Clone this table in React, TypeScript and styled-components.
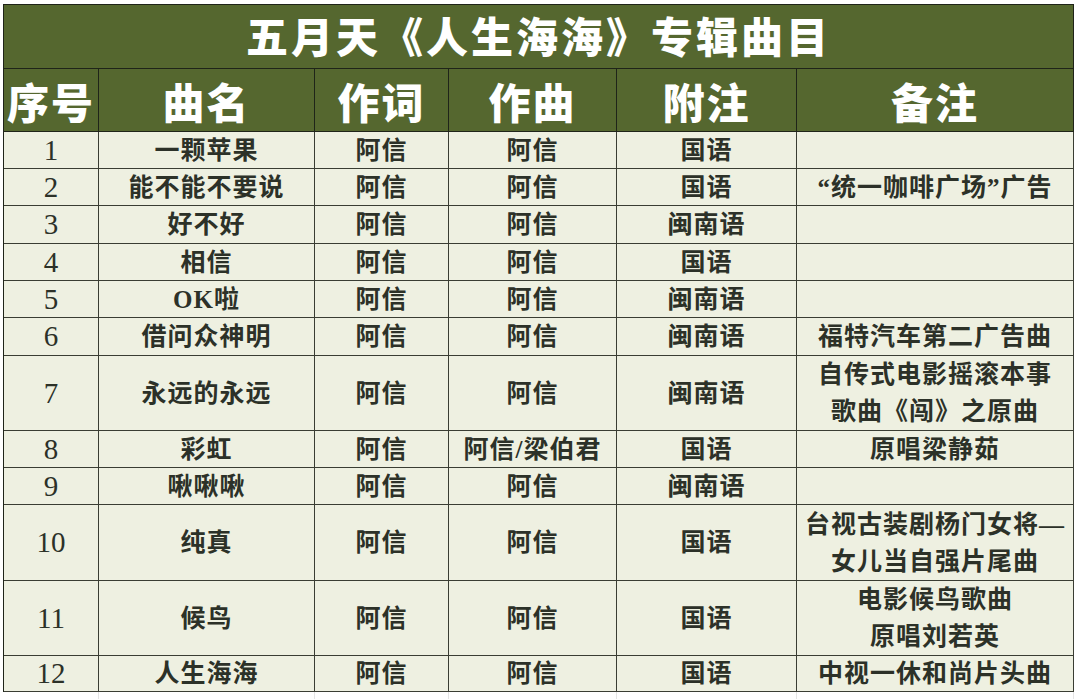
import styled, { createGlobalStyle } from 'styled-components'

const GlobalStyle = createGlobalStyle`
  html, body {
    margin: 0;
    padding: 0;
    background: #ffffff;
  }
  body {
    font-family: 'Liberation Serif', 'Noto Sans CJK SC', serif;
  }
`

const Page = styled.div`
  width: 1080px;
  height: 699px;
  padding: 4px 0 0 3px;
  box-sizing: border-box;
  overflow: hidden;
`

const columns = '95px 216px 134px 168px 180px 277px'

const Sheet = styled.div`
  display: grid;
  width: 1071px;
  grid-template-columns: ${columns};
  grid-template-rows: 64px 63px 37px 37px 38px 37px 37px 38px 75px 37px 37px 76px 75px 36px;
  border-top: 1px solid #1f2419;
  border-left: 1px solid #1f2419;
  box-sizing: border-box;
`

// faint spreadsheet gridlines continuing under the table
const Spill = styled.div`
  display: grid;
  width: 1071px;
  height: 12px;
  padding-left: 1px;
  box-sizing: border-box;
  grid-template-columns: ${columns};
`

const SpillCol = styled.div`
  border-right: 1px solid #e4e4e4;
`

const Title = styled.div`
  grid-column: 1 / -1;
  display: flex;
  align-items: center;
  justify-content: center;
  background: #55672f;
  color: #ffffff;
  font-family: 'Noto Sans CJK SC', sans-serif;
  font-weight: 900;
  font-size: 42px;
  letter-spacing: 3px;
  border-right: 1px solid #1f2419;
  border-bottom: 1px solid #1f2419;
  padding-bottom: 4px;
`

const Head = styled.div`
  display: flex;
  align-items: center;
  justify-content: center;
  background: #55672f;
  color: #ffffff;
  font-family: 'Noto Sans CJK SC', sans-serif;
  font-weight: 900;
  font-size: 42px;
  letter-spacing: 2px;
  border-right: 1px solid #1f2419;
  border-bottom: 1px solid #1f2419;
`

const Cell = styled.div<{ $num?: boolean }>`
  display: flex;
  flex-direction: column;
  align-items: center;
  justify-content: center;
  background: #eef0e1;
  color: #2c3128;
  font-family: ${(p) =>
    p.$num
      ? "'Liberation Serif', serif"
      : "'Liberation Serif', 'Noto Sans CJK SC', serif"};
  font-weight: ${(p) => (p.$num ? 400 : 700)};
  font-size: ${(p) => (p.$num ? '29px' : '25px')};
  letter-spacing: ${(p) => (p.$num ? '0' : '1px')};
  line-height: 37px;
  white-space: nowrap;
  border-right: 1px solid #3a3d33;
  border-bottom: 1px solid #3a3d33;
`

type Song = {
  no: number
  name: string
  lyric: string
  music: string
  lang: string
  note: string[]
}

const songs: Song[] = [
  { no: 1, name: '一颗苹果', lyric: '阿信', music: '阿信', lang: '国语', note: [] },
  { no: 2, name: '能不能不要说', lyric: '阿信', music: '阿信', lang: '国语', note: ['“统一咖啡广场”广告'] },
  { no: 3, name: '好不好', lyric: '阿信', music: '阿信', lang: '闽南语', note: [] },
  { no: 4, name: '相信', lyric: '阿信', music: '阿信', lang: '国语', note: [] },
  { no: 5, name: 'OK啦', lyric: '阿信', music: '阿信', lang: '闽南语', note: [] },
  { no: 6, name: '借问众神明', lyric: '阿信', music: '阿信', lang: '闽南语', note: ['福特汽车第二广告曲'] },
  { no: 7, name: '永远的永远', lyric: '阿信', music: '阿信', lang: '闽南语', note: ['自传式电影摇滚本事', '歌曲《闯》之原曲'] },
  { no: 8, name: '彩虹', lyric: '阿信', music: '阿信/梁伯君', lang: '国语', note: ['原唱梁静茹'] },
  { no: 9, name: '啾啾啾', lyric: '阿信', music: '阿信', lang: '闽南语', note: [] },
  { no: 10, name: '纯真', lyric: '阿信', music: '阿信', lang: '国语', note: ['台视古装剧杨门女将—', '女儿当自强片尾曲'] },
  { no: 11, name: '候鸟', lyric: '阿信', music: '阿信', lang: '国语', note: ['电影候鸟歌曲', '原唱刘若英'] },
  { no: 12, name: '人生海海', lyric: '阿信', music: '阿信', lang: '国语', note: ['中视一休和尚片头曲'] },
]

const headers = ['序号', '曲名', '作词', '作曲', '附注', '备注']

const App = () => {
  return (
    <>
      <GlobalStyle />
      <Page>
        <Sheet>
          <Title>五月天《人生海海》专辑曲目</Title>
          {headers.map((h) => (
            <Head key={h}>{h}</Head>
          ))}
          {songs.map((s) => [
            <Cell $num key={`${s.no}-no`}>{s.no}</Cell>,
            <Cell key={`${s.no}-name`}>{s.name}</Cell>,
            <Cell key={`${s.no}-lyric`}>{s.lyric}</Cell>,
            <Cell key={`${s.no}-music`}>{s.music}</Cell>,
            <Cell key={`${s.no}-lang`}>{s.lang}</Cell>,
            <Cell key={`${s.no}-note`}>
              {s.note.map((line, i) => (
                <span key={i}>{line}</span>
              ))}
            </Cell>,
          ])}
        </Sheet>
        <Spill>
          {headers.map((h) => (
            <SpillCol key={h} />
          ))}
        </Spill>
      </Page>
    </>
  )
}

export default App
